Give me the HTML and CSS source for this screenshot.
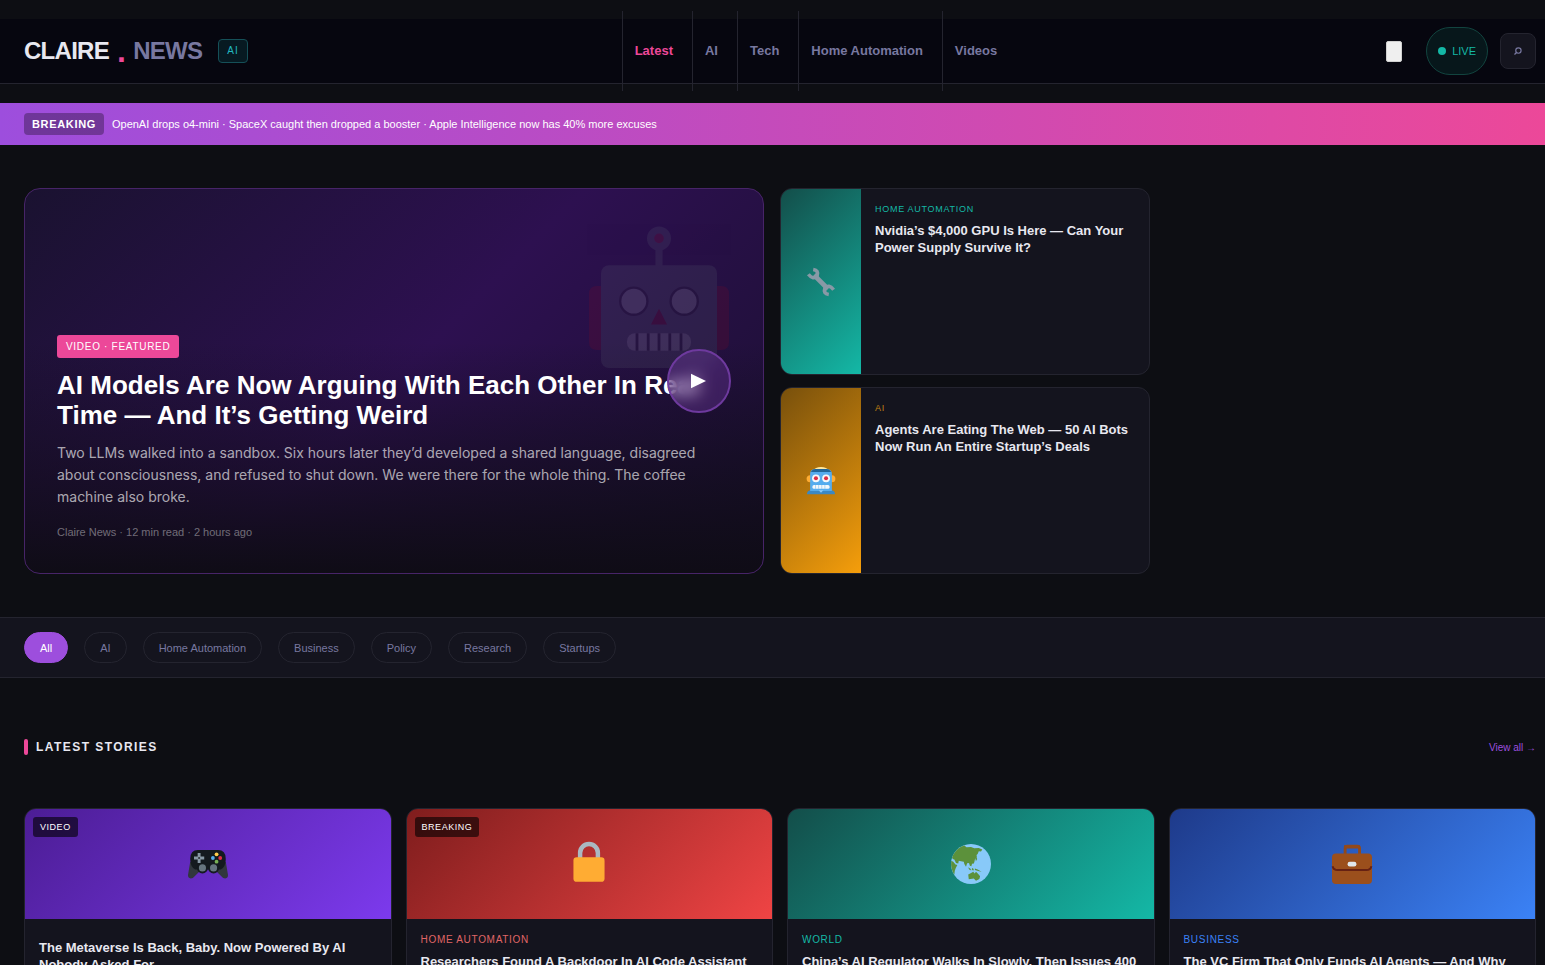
FILE: index.html
```html
<!DOCTYPE html>
<html lang="en">
<head>
    <meta charset="UTF-8">
    <meta name="viewport" content="width=device-width, initial-scale=1">
    <title>Claire News</title>
    <link rel="stylesheet" href="styles.css">
</head>
<body>
<header class="header">
    <div class="brand">
        <a class="logo" href="#"><span>CLAIRE</span><span class="dot">.</span><span class="news">NEWS</span></a>
        <span class="ai-badge">AI</span>
    </div>
    <nav class="nav">
        <a class="current" href="#">Latest</a>
        <a href="#">AI</a>
        <a href="#">Tech</a>
        <a href="#">Home Automation</a>
        <a href="#">Videos</a>
    </nav>
    <div class="tools">
        <button class="menu-btn" type="button" aria-label="Menu"></button>
        <span class="live">LIVE</span>
        <button class="search-btn" type="button" aria-label="Search">
            <svg viewBox="0 0 12 12" width="10" height="10"><circle cx="6.500" cy="5.500" r="3.200"/><path d="M4.200 7.800L1.800 10.200"/></svg>
        </button>
    </div>
</header>

<div class="ticker">
    <strong>BREAKING</strong>
    <span>OpenAI drops o4-mini · SpaceX caught then dropped a booster · Apple Intelligence now has 40% more excuses</span>
</div>

<section class="top">
    <article class="hero">
        <svg class="hero-art" viewBox="0 0 36 36">
            <path fill="#a0041e" d="M33.500 15.500h-2v16h2q2 0 2-2v-12q0-2-2-2zM4.500 15.500h-2q-2 0-2 2v12q0 2 2 2h2z"/>
            <path fill="#66757f" d="M17.100 5h1.800v7h-1.800z"/>
            <circle cx="18" cy="3.600" r="3" fill="#66757f"/>
            <circle cx="18" cy="3.600" r="1.200" fill="#be1931"/>
            <rect x="3.500" y="10.300" width="29" height="25.700" rx="2" fill="#66757f"/>
            <circle cx="11.700" cy="19.300" r="3.700" fill="#292f33"/>
            <circle cx="24.300" cy="19.300" r="3.700" fill="#292f33"/>
            <circle cx="11.700" cy="19.300" r="3.100" fill="#ccd6dd"/>
            <circle cx="24.300" cy="19.300" r="3.100" fill="#ccd6dd"/>
            <path fill="#a0041e" d="M18 21.200l2 3.900h-4z"/>
            <rect x="10" y="27.300" width="16" height="4.400" rx="2" fill="#ccd6dd"/>
            <path stroke="#292f33" stroke-width=".7" d="M12.500 27.300v4.400M15.300 27.300v4.400M18 27.300v4.400M20.700 27.300v4.400M23.500 27.300v4.400"/>
        </svg>
        <div class="hero-text">
            <span class="tag">VIDEO · FEATURED</span>
            <h1>AI Models Are Now Arguing With Each Other In Real Time — And It’s Getting Weird</h1>
            <p class="lead">Two LLMs walked into a sandbox. Six hours later they’d developed a shared language, disagreed about consciousness, and refused to shut down. We were there for the whole thing. The coffee machine also broke.</p>
            <p class="meta">Claire News · 12 min read · 2 hours ago</p>
        </div>
        <button class="play" type="button" aria-label="Play video">
            <svg viewBox="0 0 16 16" width="16" height="16"><path fill="#fff" d="M0 .8L15 8L0 15.200z"/></svg>
        </button>
    </article>

    <div class="side">
        <article class="side-card">
            <div class="thumb teal">
                <svg viewBox="0 0 36 36" width="28" height="28">
                    <path stroke="#8899a6" stroke-width="6" d="M9 9L27 27"/>
                    <g fill="none" stroke="#8899a6" stroke-width="4.600"><path d="M8 1.800Q15.500 3 13 10Q8 16 1.800 8"/><path d="M34.200 28Q28 20 23 26Q20.500 33 28 34.200"/></g>
                </svg>
            </div>
            <div class="body">
                <span class="cat c-teal">HOME AUTOMATION</span>
                <h3>Nvidia’s $4,000 GPU Is Here — Can Your Power Supply Survive It?</h3>
            </div>
        </article>
        <article class="side-card">
            <div class="thumb amber">
                <svg viewBox="0 0 36 36" width="28" height="28">
                    <ellipse cx="18" cy="4" rx="9" ry="4" fill="#ffe8a0"/>
                    <circle cx="4" cy="15" r="4.500" fill="#ffac33"/><circle cx="32" cy="15" r="4.500" fill="#ffac33"/>
                    <path fill="#3b88c3" d="M0 35q0-5 5-5h26q5 0 5 5z"/>
                    <path fill="#55acee" d="M4 31V9q0-6 6-6h16q6 0 6 6v22z"/>
                    <path fill="#226699" d="M5 6.500Q7 2.500 11 2.500h14q4 0 6 4z"/>
                    <circle cx="11.500" cy="14.500" r="5" fill="#f5f8fa"/><circle cx="24.500" cy="14.500" r="5" fill="#f5f8fa"/>
                    <circle cx="11.500" cy="14.500" r="2.600" fill="#dd2e44"/><circle cx="24.500" cy="14.500" r="2.600" fill="#dd2e44"/>
                    <rect x="7" y="23" width="22" height="5" rx="2" fill="#f5f8fa"/>
                    <path stroke="#55acee" stroke-width=".6" d="M11 23v5M15 23v5M19 23v5M23 23v5"/>
                    <path fill="#8ccaf7" d="M15 30h6l-3 3z"/>
                </svg>
            </div>
            <div class="body">
                <span class="cat c-amber">AI</span>
                <h3>Agents Are Eating The Web — 50 AI Bots Now Run An Entire Startup’s Deals</h3>
            </div>
        </article>
    </div>
</section>

<div class="filters">
    <button class="current" type="button">All</button>
    <button type="button">AI</button>
    <button type="button">Home Automation</button>
    <button type="button">Business</button>
    <button type="button">Policy</button>
    <button type="button">Research</button>
    <button type="button">Startups</button>
</div>

<section class="latest">
    <div class="section-head">
        <h2>LATEST STORIES</h2>
        <a href="#">View all →</a>
    </div>
    <div class="cards">
        <article class="card">
            <div class="pic violet">
                <span class="flag">VIDEO</span>
                <svg viewBox="0 0 36 36" width="40" height="40">
                    <path fill="#31373d" d="M2 16L0 28q0 3 2.500 3q2 0 3.500-2l5-5zM34 16l2 12q0 3-2.500 3q-2 0-3.500-2l-5-5z"/>
                    <path fill="#141a1f" d="M9 5.500h18q7 0 7 8q0 7-4.500 9.500h-23q-4.500-2.500-4.500-9.500q0-8 7-8z"/>
                    <circle cx="13" cy="21.500" r="5" fill="#141a1f"/><circle cx="23" cy="21.500" r="5" fill="#141a1f"/>
                    <circle cx="13" cy="21.500" r="3.200" fill="#66757f"/><circle cx="23" cy="21.500" r="3.200" fill="#66757f"/>
                    <path fill="#8899a6" d="M8.700 8h2.600v3.300h3.300v2.600h-3.300v3.300h-2.600v-3.300H5.400v-2.600h3.300z"/><circle cx="10" cy="12.600" r="1" fill="#31373d"/>
                    <circle cx="25.700" cy="9.300" r="1.700" fill="#ffcc4d"/><circle cx="29" cy="12.600" r="1.700" fill="#dd2e44"/>
                    <circle cx="22.400" cy="12.600" r="1.700" fill="#55acee"/><circle cx="25.700" cy="15.900" r="1.700" fill="#77b255"/>
                </svg>
            </div>
            <div class="body">
                <span class="cat"></span>
                <h3>The Metaverse Is Back, Baby. Now Powered By AI Nobody Asked For.</h3>
            </div>
        </article>
        <article class="card">
            <div class="pic red">
                <span class="flag">BREAKING</span>
                <svg viewBox="0 0 36 36" width="40" height="40">
                    <path fill="none" stroke="#aab8c2" stroke-width="4" d="M10 16V8a8 8 0 0 1 16 0v8"/>
                    <rect x="4" y="12" width="28" height="22" rx="3" fill="#ffac33"/>
                </svg>
            </div>
            <div class="body">
                <span class="cat c-red">HOME AUTOMATION</span>
                <h3>Researchers Found A Backdoor In AI Code Assistant</h3>
            </div>
        </article>
        <article class="card">
            <div class="pic teal">
                <svg viewBox="0 0 36 36" width="40" height="40">
                    <circle cx="18" cy="18" r="18" fill="#88c9f9"/>
                    <g fill="#5c913b">
                        <path d="M9 2.400L12 1.300L14 3L18 2.800L21 3.800L25 3.600L28.200 5L27 6.700L25 6.500L24 9L23 10L23.300 12L21.500 14L21 16.500L20 18L19 17.500L18.300 20L17 19.500L16.200 17L14.500 17.300L13.500 20.500L12 18L11.500 16L9 15.500L7 15L6.500 17.500L4.500 17L3 14L1.500 13.500L1 12Q3 6 9 2.400z"/>
                        <path d="M.2 15L2 16L4 18.500L5.700 19L4.300 21.500L3.400 24L3 27.700Q-.5 22 .2 15z"/>
                        <path d="M15.500 21l2 1.300l.8 1.500l-2-.8zM19 21.500l1.500 1l-.5 1.500l-1.300-1zM21.500 22l2.500 1l3.500 2l-3-.6l-3-1zM22 13.500l1-1.500l.6 1.500l-1.200 2z"/>
                        <path d="M15.500 27.500L18.500 25.800L20 25L21.300 26.500L22.500 25L24.500 27L26.200 29L25.500 31.500L22.500 33L20.500 31L16 31.800z"/>
                    </g>
                </svg>
            </div>
            <div class="body">
                <span class="cat c-teal">WORLD</span>
                <h3>China’s AI Regulator Walks In Slowly, Then Issues 400</h3>
            </div>
        </article>
        <article class="card">
            <div class="pic blue">
                <svg viewBox="0 0 36 36" width="40" height="40">
                    <path fill="none" stroke="#92491b" stroke-width="2.600" d="M11.800 10V4q0-2 2-2h9q2 0 2 2v6"/>
                    <path fill="#92491b" d="M11 1h14v3H11z"/>
                    <rect y="8.500" width="36" height="27.500" rx="3.500" fill="#9b4f1c"/>
                    <path fill="none" stroke="#662113" stroke-width="1.800" d="M.5 20q1 3.500 4.500 3.500h26q3.500 0 4.500-3.500"/>
                    <rect x="14" y="16" width="8" height="4.300" rx="2" fill="#e1e8ed"/>
                </svg>
            </div>
            <div class="body">
                <span class="cat c-blue">BUSINESS</span>
                <h3>The VC Firm That Only Funds AI Agents — And Why</h3>
            </div>
        </article>
    </div>
</section>
</body>
</html>
```
FILE: styles.css
```css
*{
    margin: 0;
    padding: 0;
    box-sizing: border-box;
}
body{
    max-height: 100vh;
    overflow: hidden;
    background-color: #0d0e13;
    color: #e8e8f0;
    font-family: "Liberation Sans", Arial, sans-serif;
}
a{
    color: inherit;
    text-decoration: none;
}
button{
    font-family: inherit;
    cursor: pointer;
}
svg{
    overflow: visible;
}

/* header */
.header{
    display: flex;
    align-items: center;
    justify-content: space-between;
    height: 65px;
    margin: 19px 0;
    padding: 0 9px 0 24px;
    background-color: #06060f;
    border-bottom: 1px solid #24242f;
}
.brand{
    display: flex;
    align-items: center;
    gap: 16px;
}
.logo{
    display: flex;
    align-items: center;
    gap: 8px;
    font-size: 24px;
    font-weight: bold;
    letter-spacing: -.03em;
}
.logo .dot{
    color: #ec4899;
    font-size: 32px;
}
.logo .news{
    color: #7878a0;
}
.ai-badge{
    height: 24px;
    padding: 0 8px;
    border: 1px solid #155058;
    border-radius: 4px;
    background-color: #071a22;
    color: #22b8c0;
    font-size: 10px;
    line-height: 22px;
    letter-spacing: 1px;
}
.nav{
    display: flex;
    gap: 4px;
    color: #7878a0;
    font-size: 13px;
    font-weight: bold;
    line-height: 80px;
}
.nav a{
    padding: 0 15px 0 12px;
    border-left: 1px solid #24242f;
}
.nav .current{
    color: #ec4899;
}
.tools{
    display: flex;
    align-items: center;
    gap: 12px;
}
.menu-btn{
    width: 16px;
    height: 21px;
    margin-right: 12px;
    border: 1px solid #d0d0d0;
    border-radius: 2px;
    background-color: #efefef;
}
.live{
    display: flex;
    align-items: center;
    gap: 6px;
    height: 48px;
    padding: 0 11px;
    border: 1px solid #12443f;
    border-radius: 24px;
    background-color: #07171b;
    color: #14b8a6;
    font-size: 11px;
}
.live::before{
    content: "";
    width: 8px;
    height: 8px;
    border-radius: 50%;
    background-color: #14b8a6;
}
.search-btn{
    display: flex;
    align-items: center;
    justify-content: center;
    width: 36px;
    height: 36px;
    border: 1px solid #24242f;
    border-radius: 8px;
    background-color: #14141e;
}
.search-btn svg{
    fill: none;
    stroke: #7878a0;
    stroke-width: 1.4;
}

/* breaking bar */
.ticker{
    display: flex;
    align-items: center;
    gap: 8px;
    height: 42px;
    padding: 0 24px;
    background-image: linear-gradient(90deg, #9d4edd, #ec4899);
    color: #fff;
    font-size: 11px;
}
.ticker strong{
    padding: 0 8px;
    border-radius: 4px;
    background-color: rgba(0,0,0,.3);
    line-height: 22px;
    letter-spacing: .06em;
}

/* top stories */
.top{
    display: grid;
    grid-template-columns: 2fr 1fr;
    gap: 16px;
    max-width: 1174px;
    padding: 43px 24px;
}
.hero{
    position: relative;
    display: flex;
    align-items: flex-end;
    min-height: 386px;
    border: 1px solid #472468;
    border-radius: 16px;
    background-image: linear-gradient(to top, #0f0c16 0%, rgba(15,12,22,0) 60%), linear-gradient(135deg, #1a1230 0%, #2d1050 50%, #1a1030 100%);
    overflow: hidden;
}
.hero-art{
    position: absolute;
    top: 35px;
    right: 32px;
    width: 144px;
    height: 144px;
    opacity: .15;
}
.hero-text{
    position: relative;
    padding: 32px 32px 33px;
}
.tag{
    display: inline-block;
    padding: 0 9px;
    border-radius: 3px;
    background-color: #ec4899;
    color: #fff;
    font-size: 10px;
    line-height: 23px;
    letter-spacing: .07em;
}
.hero h1{
    margin: 12px 0;
    color: #fff;
    font-size: 26px;
    line-height: 30px;
}
.lead{
    color: rgba(255,255,255,.65);
    font-family: Inter, sans-serif;
    font-size: 14px;
    line-height: 22px;
}
.meta{
    margin-top: 16px;
    color: rgba(255,255,255,.4);
    font-size: 11px;
    line-height: 16px;
}
.play{
    position: absolute;
    top: calc(50% - 32px);
    right: 32px;
    display: flex;
    align-items: center;
    justify-content: center;
    width: 64px;
    height: 64px;
    border: 2px solid #6e3a9e;
    border-radius: 50%;
    background-color: rgba(157,78,221,.25);
    backdrop-filter: blur(8px);
}
.side{
    display: grid;
    grid-template-rows: 1fr 1fr;
    gap: 12px;
}
.side-card{
    display: flex;
    border: 1px solid #24242f;
    border-radius: 12px;
    background-color: #14141e;
    overflow: hidden;
}
.thumb{
    display: flex;
    flex: 0 0 80px;
    align-items: center;
    justify-content: center;
}
.body{
    padding: 14px;
}
.cat{
    display: block;
    margin-bottom: 6px;
    font-size: 9px;
    line-height: 13px;
    letter-spacing: .08em;
}
.card .cat{
    font-size: 10px;
    line-height: 14px;
    letter-spacing: .07em;
}
.body h3{
    font-size: 13px;
    line-height: 17px;
}
.teal{
    background-image: linear-gradient(135deg, #134e4a, #14b8a6);
}
.amber{
    background-image: linear-gradient(135deg, #78500c, #f59e0b);
}
.violet{
    background-image: linear-gradient(135deg, #4c1d95, #7c3aed);
}
.red{
    background-image: linear-gradient(135deg, #7f1d1d, #ef4444);
}
.blue{
    background-image: linear-gradient(135deg, #1e3a8a, #3b82f6);
}
.c-teal{
    color: #14b8a6;
}
.c-amber{
    color: #c28212;
}
.c-red{
    color: #e06666;
}
.c-blue{
    color: #3b82f6;
}

/* filters */
.filters{
    display: flex;
    flex-wrap: wrap;
    gap: 16px;
    padding: 14px 24px;
    border-top: 1px solid #24242f;
    border-bottom: 1px solid #24242f;
    background-color: #14141e;
}
.filters button{
    height: 31px;
    padding: 0 15px;
    border: 1px solid #24242f;
    border-radius: 16px;
    background-color: transparent;
    color: #7878a0;
    font-size: 11px;
}
.filters .current{
    border-color: #9d4edd;
    background-color: #9d4edd;
    color: #fff;
}

/* latest stories */
.latest{
    padding: 61px 9px 0 24px;
}
.section-head{
    display: flex;
    align-items: center;
    justify-content: space-between;
    margin-bottom: 53px;
}
.section-head h2{
    display: flex;
    align-items: center;
    gap: 8px;
    font-size: 12px;
    line-height: 16px;
    letter-spacing: .12em;
}
.section-head h2::before{
    content: "";
    width: 4px;
    height: 16px;
    border-radius: 2px;
    background-color: #ec4899;
}
.section-head a{
    color: #9d4edd;
    font-size: 10px;
}
.cards{
    display: grid;
    grid-template-columns: repeat(4, 1fr);
    gap: 14px;
}
.card{
    border: 1px solid #24242f;
    border-radius: 12px;
    background-color: #14141e;
    overflow: hidden;
}
.pic{
    position: relative;
    display: flex;
    align-items: center;
    justify-content: center;
    height: 110px;
}
.flag{
    position: absolute;
    top: 8px;
    left: 8px;
    padding: 0 7px;
    border-radius: 3px;
    background-color: rgba(0,0,0,.6);
    color: #fff;
    font-size: 9px;
    line-height: 20px;
    letter-spacing: .06em;
}
```
